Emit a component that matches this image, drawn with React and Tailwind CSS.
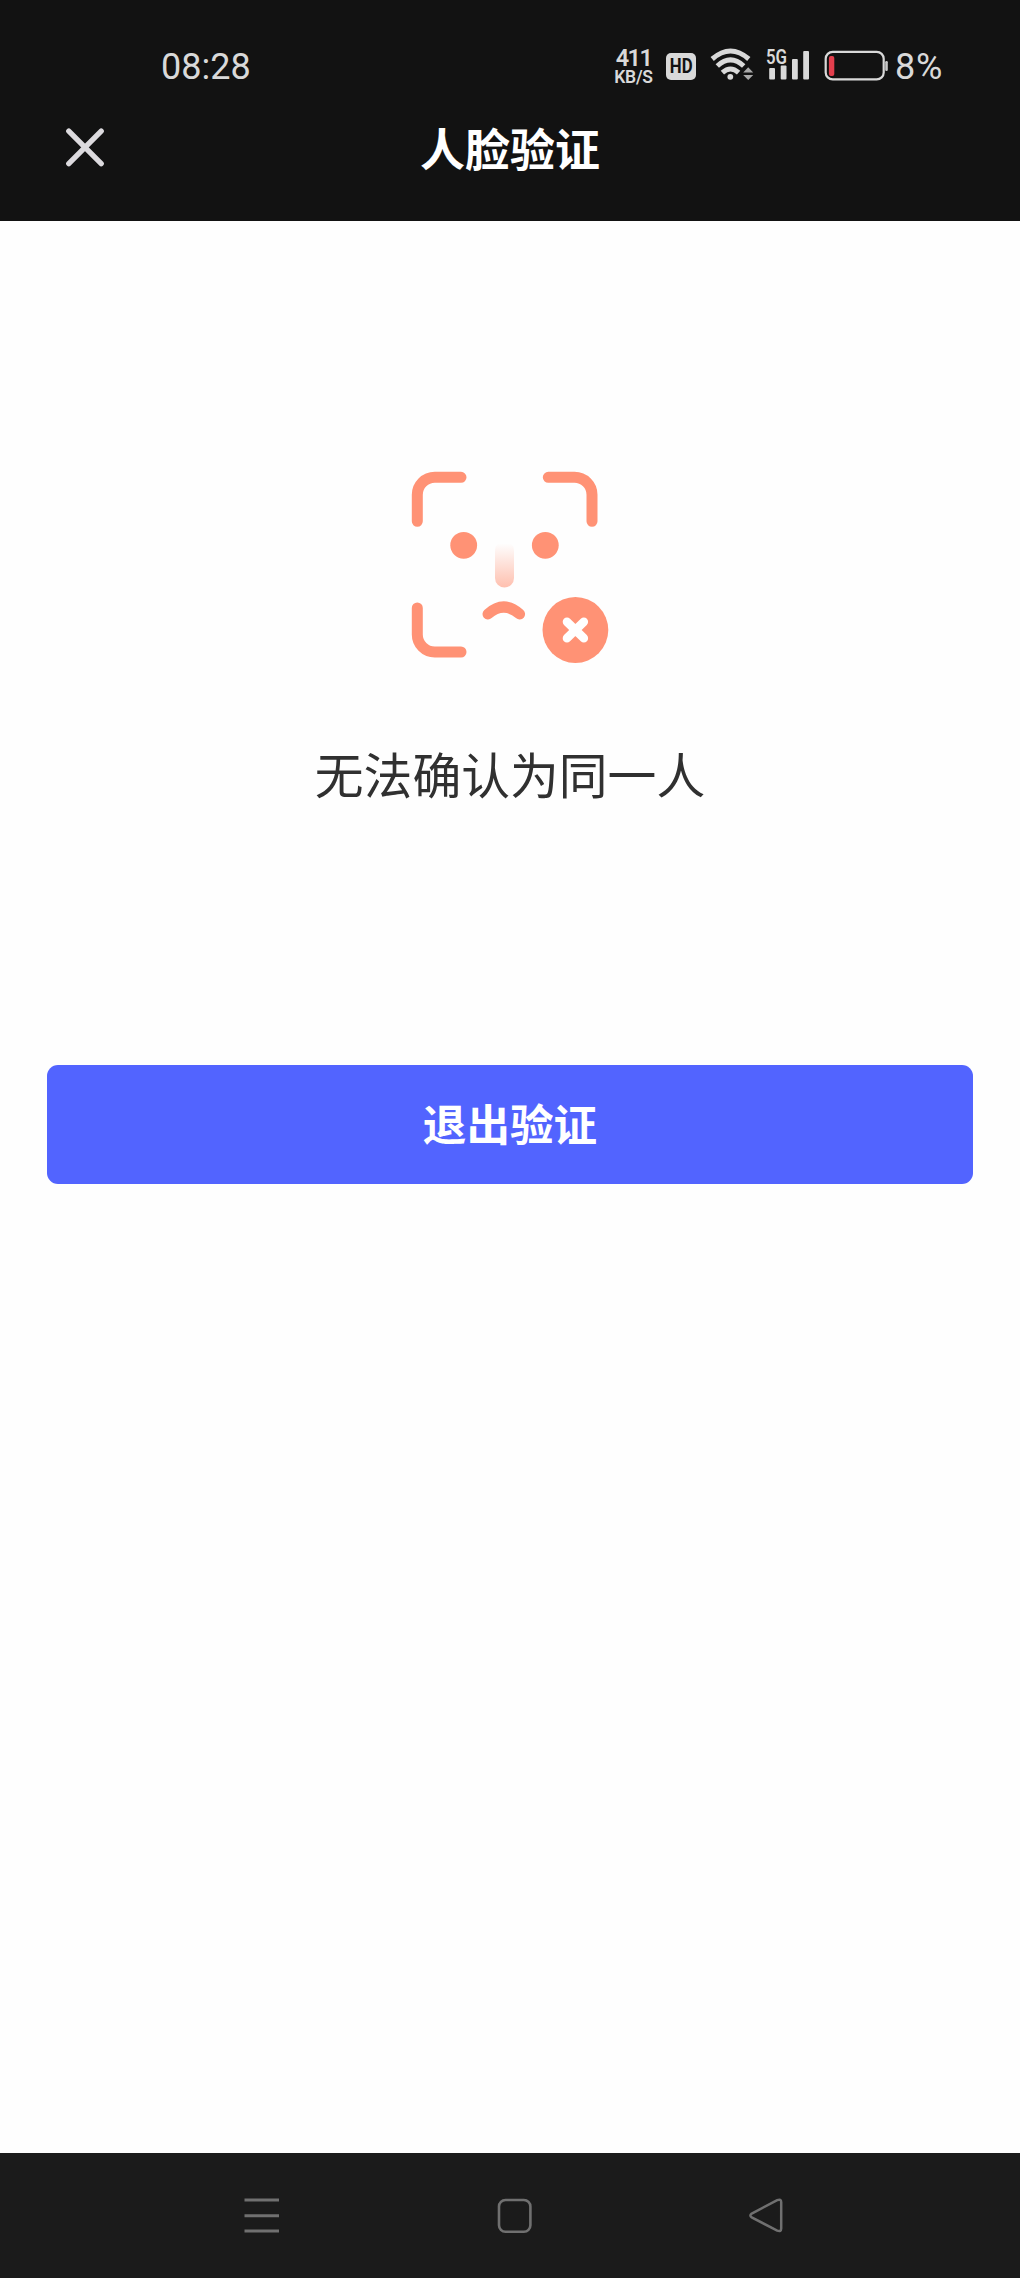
function WifiIcon() {
  return (
    <svg className="ml-[14px] mt-[2px] h-8 w-[44px]" viewBox="710 48 44 32" fill="none" stroke="#d9d9d9" strokeWidth="5">
      <path d="M712.2 59Q730.5 43 748.8 59" />
      <path d="M717.3 66Q730.5 53.8 743.7 66" />
      <path d="M722.4 72.6Q730.5 65.4 738.6 72.6" />
      <circle cx="730.3" cy="76.8" r="2.9" fill="#d9d9d9" stroke="none" />
      <path d="M748.2 67.2l5 5.4h-10zM748.2 80l5-5h-10z" fill="#a9a9a9" stroke="none" />
    </svg>
  );
}

function Signal() {
  return (
    <div className="relative ml-[12px] h-[34px] w-[44px]">
      <span className="absolute left-0 top-[2px] origin-left scale-x-[.84] font-['Roboto'] text-[20px] font-semibold leading-[18px]">5G</span>
      <svg className="h-[34px] w-[44px]" viewBox="766 46 44 34" fill="#d9d9d9">
        <rect x="769.2" y="68" width="5.8" height="11.6" rx="1" />
        <rect x="780.7" y="65.5" width="5.8" height="14.1" rx="1" />
        <rect x="792" y="59" width="5.8" height="20.6" rx="1" />
        <rect x="803.2" y="51" width="5.8" height="28.6" rx="1" />
      </svg>
    </div>
  );
}

function Battery() {
  return (
    <svg className="ml-[14px] mt-[4px] h-[32px] w-[66px]" viewBox="824 50 66 32" fill="none">
      <rect x="825.7" y="51.8" width="58" height="27.6" rx="7" stroke="#d9d9d9" strokeWidth="2.2" />
      <rect x="828.9" y="56" width="5.4" height="20" rx="2" fill="#e33f4d" />
      <rect x="885.2" y="61" width="2.6" height="10" rx="1.2" fill="#c9c9c9" />
    </svg>
  );
}

function StatusBar() {
  return (
    <div className="flex h-[100px] items-start pl-[161px] pt-[46px] font-['Roboto'] text-[#d9d9d9]">
      <span className="w-[453px] text-[36px] leading-[42px]">08:28</span>
      <div className="flex w-[39px] flex-col items-center whitespace-nowrap pt-[2px]">
        <span className="text-[23.5px] font-semibold leading-[20px] tracking-[-1.6px]">411</span>
        <span className="text-[17.5px] font-semibold leading-[18px] tracking-[-0.3px]">KB/S</span>
      </div>
      <div className="ml-[13px] mt-[6.5px] flex h-[27px] w-[30px] items-center justify-center rounded-[5px] bg-[#d9d9d9]">
        <span className="scale-x-[.8] text-[21px] font-bold leading-none text-[#121212]">HD</span>
      </div>
      <WifiIcon />
      <Signal />
      <Battery />
      <span className="ml-[5px] text-[36px] leading-[42px] tracking-[0.8px]">8%</span>
    </div>
  );
}

function FaceMismatchIcon() {
  return (
    <svg className="h-[193px] w-[198px]" viewBox="411 471 198 193" fill="none">
      <defs>
        <linearGradient id="nose" x1="0" y1="0" x2="0" y2="1">
          <stop offset="0.05" stopColor="#ff9275" stopOpacity="0" />
          <stop offset="1" stopColor="#ff9275" stopOpacity=".58" />
        </linearGradient>
      </defs>
      <g stroke="#ff9275" strokeWidth="11" strokeLinecap="round">
        <path d="M417.3 521.3V494.8A17.5 17.5 0 0 1 434.8 477.3H461" />
        <path d="M548.3 477.3H574.5A17.5 17.5 0 0 1 592 494.8V521.3" />
        <path d="M417.3 608V634.5A17.5 17.5 0 0 0 434.8 652H461" />
        <path d="M488 614Q503.8 600 519.6 614" />
      </g>
      <circle cx="463.7" cy="545.3" r="13.4" fill="#ff9275" />
      <circle cx="545.3" cy="545.3" r="13.4" fill="#ff9275" />
      <rect x="495" y="541" width="19" height="46.6" rx="9.5" fill="url(#nose)" />
      <circle cx="575.4" cy="630" r="32.9" fill="#ff9275" />
      <path d="M567 621.8l16.8 16.4M583.8 621.8L567 638.2" stroke="#fff" strokeWidth="8.6" strokeLinecap="round" />
    </svg>
  );
}

export default function App() {
  return (
    <div className="flex h-[2278px] w-[1020px] flex-col overflow-hidden bg-[#fefefe] font-['Noto_Sans_CJK_SC',sans-serif]">
      <header className="h-[221px] bg-[#121212]">
        <StatusBar />
        <div className="grid h-[96px] grid-cols-[106px_1fr_106px]">
          <button aria-label="关闭" className="pl-[64px]">
            <svg className="-mt-[3px] h-[42px] w-[42px]" viewBox="64 126 42 42" stroke="#dcdade" strokeWidth="5.4" strokeLinecap="round">
              <path d="M68.8 131.2L101.2 163.6M101.2 131.2L68.8 163.6" />
            </svg>
          </button>
          <h1 className="text-center text-[45px] font-bold leading-[96px] text-white">人脸验证</h1>
        </div>
      </header>
      <main className="flex flex-1 flex-col items-center px-[47px] pt-[250px]">
        <FaceMismatchIcon />
        <p className="mt-[70px] text-[48.8px] leading-[78px] text-[#303030]">无法确认为同一人</p>
        <button className="mt-[252.5px] h-[119.5px] w-full rounded-[11px] bg-[#5264ff] pb-[3px] text-[43.6px] font-bold text-white">退出验证</button>
      </main>
      <nav className="flex h-[125px] items-start bg-[#1b1b1b] pl-[244px] pt-[45px]">
        <svg className="h-[36px] w-[36px]" viewBox="244 2198 36 36" stroke="#707070" strokeWidth="3">
          <path d="M244.5 2200H279M244.5 2215.7H279M244.5 2231H279" />
        </svg>
        <svg className="ml-[217px] h-[36px] w-[36px]" viewBox="497 2198 36 36" fill="none" stroke="#707070" strokeWidth="2.6">
          <rect x="499" y="2200" width="31.4" height="31.8" rx="6.5" />
        </svg>
        <svg className="ml-[215px] h-[36px] w-[36px]" viewBox="748 2198 36 36" fill="none" stroke="#707070" strokeWidth="2.5">
          <path d="M751.7 2213.6L777.2 2200.2Q781.2 2198.6 781.2 2202.2V2228.6Q781.2 2232 777.2 2230.6L751.7 2217.4Q749 2215.6 751.7 2213.6Z" />
        </svg>
      </nav>
    </div>
  );
}
